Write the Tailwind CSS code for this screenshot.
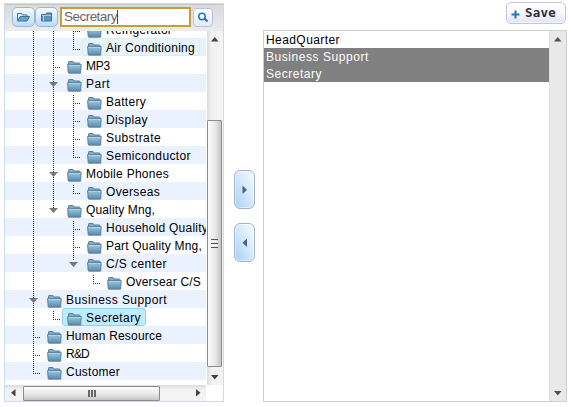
<!DOCTYPE html>
<html lang="en">
<head>
<meta charset="utf-8">
<title>Department selector</title>
<script src="https://cdn.jsdelivr.net/npm/@tailwindcss/browser@4"></script>
</head>
<body class="h-[407px] w-[571px] overflow-hidden bg-white font-['Liberation_Sans',sans-serif] text-[12px] text-black">
<svg class="absolute h-0 w-0">
  <defs>
    <linearGradient id="fg" x1="0" y1="0" x2="0" y2="1"><stop offset="0" stop-color="#a3c8de"/><stop offset="1" stop-color="#568db2"/></linearGradient>
    <symbol id="folder" viewBox="0 0 15 13">
      <path d="M1.500 12.500h12l1-1" fill="none" stroke="#a8a8a0" stroke-width="1"/>
      <path d="M1.500 3.500V1.200q0-.7.7-.7h3.800l1 1.500h5.300q.7 0 .7.7v1.300" fill="#7fabc6" stroke="#557f9b"/>
      <path d="M.6 3.500h13.600l-.6 8.200H1.200z" fill="url(#fg)" stroke="#4d7c9c" stroke-width=".9"/>
      <path d="M1.500 4.400h12" stroke="#c0dceb" stroke-width=".7"/>
    </symbol>
  </defs>
</svg>
<main class="flex h-full">
  <section class="ml-1 mt-[3px] flex h-[399px] w-[220px] shrink-0 flex-col border border-[#cbdcf0]">
    <header class="flex h-[27px] shrink-0 items-start border-t border-[#c8c8c8] bg-linear-to-b from-[#dadada] to-[#ececec] pl-[7px] pt-[2px]">
      <button class="flex h-[20px] w-[23px] items-center justify-center rounded-[5px] border border-[#9fb6d3] bg-linear-to-b from-[#f4faff] to-[#b9dbfa]">
        <svg width="15" height="12" viewBox="0 0 15 12"><path d="M1.500 9V2.500h4l1 1.500h4.500v2" fill="#e5f0f9" stroke="#3e7296"/><path d="M1.500 10 4 5.500h9.500L11 10z" fill="#6fa3c4" stroke="#3e7296"/></svg>
      </button>
      <button class="flex h-[20px] w-[23px] items-center justify-center rounded-[5px] border border-[#9fb6d3] bg-linear-to-b from-[#f4faff] to-[#b9dbfa]">
        <svg width="13" height="12" viewBox="0 0 13 12"><path d="M1.500 10V3.500h4l1-1.500h5v8z" fill="#5b93b8" stroke="#3e7296"/><path d="M2 4.500h9M3.500 5v5" stroke="#c4dceb" stroke-width=".8"/></svg>
      </button>
      <div class="ml-[2px] flex h-[20px] w-[131px] items-center border-2 border-[#c89b3c] bg-white pl-[2px] text-[13.5px] text-[#666]"><span data-w="53" data-font="13.5px 'Liberation Sans'">Secretary</span><i class="h-[14px] w-px bg-[#444]"></i></div>
      <button class="ml-[2px] mt-px flex h-[19px] w-[20px] items-center justify-center rounded-[4px] border border-[#b9c1dc] bg-linear-to-b from-white to-[#e4e9fa]">
        <svg width="12" height="11" viewBox="0 0 12 11" fill="none" stroke="#2676b8"><circle cx="5" cy="4.500" r="3.200" stroke-width="1.500"/><path d="M7.500 6.500 10.500 9.500" stroke-width="2.200"/></svg>
      </button>
    </header>
    <div class="flex h-[354px] shrink-0">
      <div class="relative w-[202px] shrink-0 overflow-hidden">
        <div id="tree" class="-mt-[11px] flex w-[201px] flex-col overflow-hidden"></div>
        <svg id="guides" class="absolute left-0 top-0" width="201" height="354" shape-rendering="crispEdges"></svg>
      </div>
      <div class="flex w-[16px] flex-col bg-linear-to-r from-[#dcdcdc] to-[#f3f3f3] to-30%">
        <div class="flex h-[89px] w-[15px] shrink-0 justify-center pt-[6px]"><svg width="8" height="5"><path d="M0 4.500h7.500L3.750 0z" fill="#444"/></svg></div>
        <div class="flex h-[247px] w-[15px] flex-col items-center justify-center gap-px rounded-[1px] border border-[#8b8b8b] bg-linear-to-r from-[#fcfcfc] via-[#ebebeb] to-[#c6c6c6]">
          <i class="h-px w-[7px] bg-[#555]"></i><i class="h-px w-[7px] bg-white"></i><i class="h-px w-[7px] bg-[#555]"></i><i class="h-px w-[7px] bg-white"></i><i class="h-px w-[7px] bg-[#555]"></i>
        </div>
        <div class="flex w-[15px] flex-1 justify-center pt-[8px]"><svg width="8" height="5"><path d="M0 0h7.500L3.750 4.500z" fill="#444"/></svg></div>
      </div>
    </div>
    <div class="flex h-[16px] w-[201px] items-center bg-linear-to-b from-[#dcdcdc] to-[#f3f3f3] to-30%">
      <div class="flex w-[18px] pl-[6px]"><svg width="5" height="8"><path d="M4.500 0v7.500L0 3.750z" fill="#444"/></svg></div>
      <div class="flex h-[15px] w-[137px] items-center justify-center rounded-[1px] border border-[#8b8b8b] bg-linear-to-b from-[#fcfcfc] via-[#ebebeb] to-[#c6c6c6]">
        <i class="h-[7px] w-[2px] bg-[#666]"></i><i class="ml-px h-[7px] w-[2px] bg-[#666]"></i><i class="ml-px h-[7px] w-[2px] bg-[#666]"></i>
      </div>
      <div class="flex flex-1 justify-end pr-[5px]"><svg width="5" height="8"><path d="M0 0v7.500L4.500 3.750z" fill="#444"/></svg></div>
    </div>
  </section>

  <div class="ml-[10px] flex w-[21px] shrink-0 flex-col gap-[14px] pt-[170px]">
    <button class="flex h-[39px] items-center justify-center rounded-[6px] border border-[#a3b4c8] bg-linear-to-tr from-[#a5cffa] via-[#d3e8fd] to-[#f6fbff] shadow-[inset_0_0_0_1px_#ffffff80]"><svg width="6" height="10"><path d="M.5.500v8.500L5 4.750z" fill="#486384"/></svg></button>
    <button class="flex h-[39px] items-center justify-center rounded-[6px] border border-[#a3b4c8] bg-linear-to-tr from-[#a5cffa] via-[#d3e8fd] to-[#f6fbff] shadow-[inset_0_0_0_1px_#ffffff80]"><svg width="6" height="10"><path d="M5 .500v8.500L.5 4.750z" fill="#486384"/></svg></button>
  </div>

  <section class="ml-[8px] flex w-[304px] shrink-0 flex-col">
    <button class="mr-px mt-[2px] flex h-[22px] w-[60px] shrink-0 items-center self-end rounded-[5px] border border-[#c3c5d8] bg-linear-to-b from-white via-[#f7f7fe] to-[#e1e3f8] pl-[4px] shadow-[inset_0_0_0_1px_#ffffff99]">
      <svg class="mt-[2px]" width="9" height="9"><path d="M4.500.500v8M.5 4.500h8" stroke="#2378b8" stroke-width="2"/></svg>
      <span class="ml-[5px] pb-[1px] font-['DejaVu_Sans_Mono',monospace] text-[12.5px] leading-[18px] font-bold text-[#2d2d35]" data-w="31" data-font="bold 12.5px 'DejaVu Sans Mono'">Save</span>
    </button>
    <div class="mt-[6px] flex h-[372px] w-[304px] border border-[#cfcfcf]">
      <ul class="flex-1 leading-[18px]">
        <li class="h-[17px] pl-[2px]"><span data-w="74">HeadQuarter</span></li>
        <li class="h-[17px] bg-[#808080] pl-[2px] text-white"><span data-w="103">Business Support</span></li>
        <li class="h-[17px] bg-[#808080] pl-[2px] text-white"><span data-w="56">Secretary</span></li>
      </ul>
      <div class="flex w-[17px] flex-col items-center justify-between border-l border-[#e2e2e2] bg-[#e9e9e9] pt-[6px] pb-[5px]">
        <svg width="8" height="5"><path d="M0 4.500h7.500L3.750 0z" fill="#505050"/></svg>
        <svg width="8" height="5"><path d="M0 0h7.500L3.750 4.500z" fill="#505050"/></svg>
      </div>
    </div>
  </section>
</main>
<script>
// label, depth, label width, expanded, highlight
const rows = [
  ["Refrigerator", 3, 66], ["Air Conditioning", 3, 89, 0, "hover"], ["MP3", 2, 24], ["Part", 2, 24, 1],
  ["Battery", 3, 40], ["Display", 3, 42], ["Substrate", 3, 55], ["Semiconductor", 3, 85],
  ["Mobile Phones", 2, 83, 1], ["Overseas", 3, 54], ["Quality Mng,", 2, 69, 1], ["Household Quality", 3, 102],
  ["Part Quality Mng,", 3, 96], ["C/S center", 3, 61, 1], ["Oversear C/S", 4, 75], ["Business Support", 1, 101, 1],
  ["Secretary", 2, 55, 0, "on"], ["Human Resource", 1, 96], ["R&amp;D", 1, 23], ["Customer", 1, 54]
];
document.getElementById("tree").innerHTML = rows.map(([label, depth, w, open, mark], i) => `
  <div class="flex h-[18px] shrink-0 items-center ${i % 2 ? "bg-[#eaf1ff]" : "bg-white"}" style="padding-left:${depth * 20 + 17}px">
    <div class="flex h-[18px] shrink-0 items-center rounded-[3px] border pl-[4px] pr-[4px] ${mark === "on" ? "border-[#94d2ea] bg-[#beebff]" : mark === "hover" ? "border-[#d9edf6] bg-[#e7f4f9]" : "border-transparent"}">
      <svg class="mt-[4px] shrink-0" width="15" height="13"><use href="#folder" width="15" height="13"/></svg>
      <span class="ml-[4px] mt-[2px] whitespace-nowrap leading-[16px]" data-w="${w}">${label}</span>
    </div>
  </div>`).join("");

// Guide lines: [x, top, bottom] and [x, y of stub], in tree viewport coordinates
const vert = [[28, 0, 343], [48, 0, 179], [68, 0, 18], [68, 64, 126], [68, 154, 162], [68, 190, 230], [88, 244, 252], [48, 280, 288]];
const stubs = [[68, 0], [68, 18], [48, 36], [68, 72], [68, 90], [68, 108], [68, 126], [68, 162], [68, 198], [68, 216], [88, 252], [48, 288], [28, 306], [28, 324], [28, 342]];
let g = "";
vert.forEach(([x, a, b]) => g += `<path d="M${x + .5} ${a}V${b}" stroke="#333" stroke-dasharray="1 1"/>`);
stubs.forEach(([x, y]) => g += `<path d="M${x} ${y + .5}h7" stroke="#333" stroke-dasharray="1 1"/>`);
rows.forEach(([, depth, , open], i) => {
  if (open) { const x = depth * 20 + 4, y = i * 18 - 3; g += `<path d="M${x} ${y}h9l-4.500 5z" fill="#777" shape-rendering="auto"/>`; }
});
document.getElementById("guides").innerHTML = g;

const ctx = document.createElement("canvas").getContext("2d");
document.querySelectorAll("[data-w]").forEach(e => {
  ctx.font = e.dataset.font || "12px 'Liberation Sans'";
  const t = e.textContent;
  e.style.letterSpacing = (e.dataset.w - ctx.measureText(t).width) / t.length + "px";
});
</script>
</body>
</html>
